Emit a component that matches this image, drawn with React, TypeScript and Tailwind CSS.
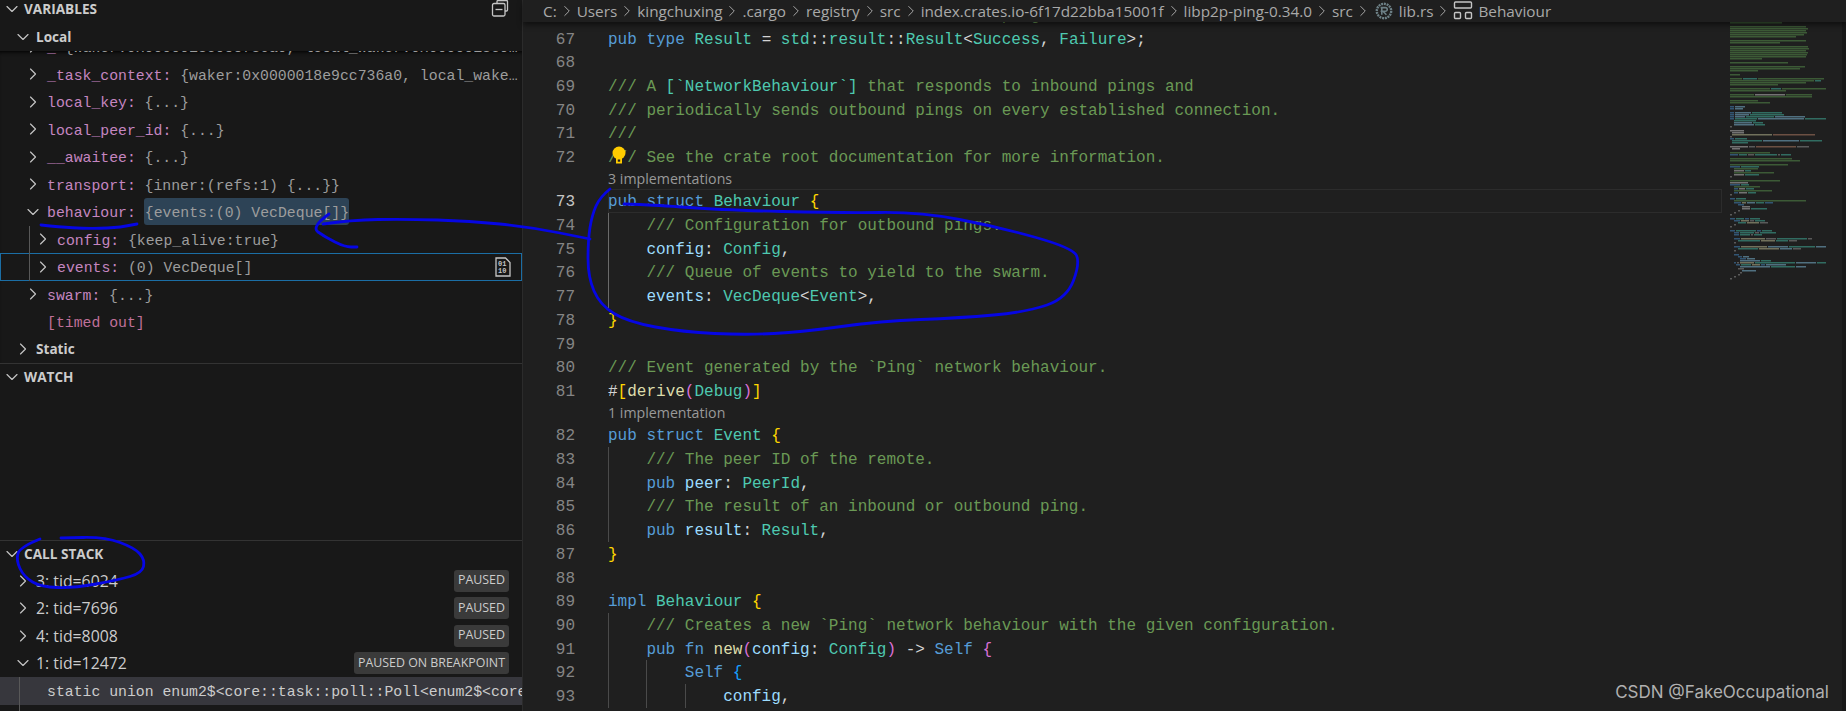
import React from 'react';
import { ChevronDown, ChevronRight } from 'lucide-react';

const SANS = 'font-["Open_Sans","Noto_Sans",sans-serif]';
const MONO = 'font-["Liberation_Mono",monospace]';

// Token colours for the editor
const TOKEN: Record<string, string> = {
  c: 'text-[#6a9955]',
  k: 'text-[#569cd6]',
  t: 'text-[#4ec9b0]',
  v: 'text-[#9cdcfe]',
  f: 'text-[#dcdcaa]',
  p: 'text-[#d4d4d4]',
  g: 'text-[#ffd700]',
  m: 'text-[#da70d6]',
  b: 'text-[#179fff]',
};

type Seg = [string, string];

interface CodeLine {
  n?: number;
  segs?: Seg[];
  guides?: number;
  active?: boolean;
  brightGuide?: boolean;
  lens?: string;
  bulb?: boolean;
}

const comment = (text: string, guides = 0, brightGuide = false): CodeLine => ({
  segs: [[text, 'c']],
  guides,
  brightGuide,
});

const lines: CodeLine[] = [
  { n: 66, ...comment('/// The result of an inbound or outbound ping.') },
  { n: 67, segs: [['pub type ', 'k'], ['Result', 't'], [' = ', 'p'], ['std', 't'], ['::', 'p'], ['result', 't'], ['::', 'p'], ['Result', 't'], ['<', 'p'], ['Success', 't'], [', ', 'p'], ['Failure', 't'], ['>;', 'p']] },
  { n: 68 },
  { n: 69, segs: [['/// A ', 'c'], ['[`NetworkBehaviour`]', 't'], [' that responds to inbound pings and', 'c']] },
  { n: 70, ...comment('/// periodically sends outbound pings on every established connection.') },
  { n: 71, ...comment('///') },
  { n: 72, ...comment('/// See the crate root documentation for more information.'), bulb: true },
  { lens: '3 implementations' },
  { n: 73, active: true, segs: [['pub struct ', 'k'], ['Behaviour', 't'], [' ', 'p'], ['{', 'g']] },
  { n: 74, ...comment('/// Configuration for outbound pings.', 1, true) },
  { n: 75, guides: 1, brightGuide: true, segs: [['config', 'v'], [': ', 'p'], ['Config', 't'], [',', 'p']] },
  { n: 76, ...comment('/// Queue of events to yield to the swarm.', 1, true) },
  { n: 77, guides: 1, brightGuide: true, segs: [['events', 'v'], [': ', 'p'], ['VecDeque', 't'], ['<', 'p'], ['Event', 't'], ['>,', 'p']] },
  { n: 78, segs: [['}', 'g']] },
  { n: 79 },
  { n: 80, ...comment('/// Event generated by the `Ping` network behaviour.') },
  { n: 81, segs: [['#', 'p'], ['[', 'g'], ['derive', 'f'], ['(', 'm'], ['Debug', 't'], [')', 'm'], [']', 'g']] },
  { lens: '1 implementation' },
  { n: 82, segs: [['pub struct ', 'k'], ['Event', 't'], [' ', 'p'], ['{', 'g']] },
  { n: 83, ...comment('/// The peer ID of the remote.', 1) },
  { n: 84, guides: 1, segs: [['pub ', 'k'], ['peer', 'v'], [': ', 'p'], ['PeerId', 't'], [',', 'p']] },
  { n: 85, ...comment('/// The result of an inbound or outbound ping.', 1) },
  { n: 86, guides: 1, segs: [['pub ', 'k'], ['result', 'v'], [': ', 'p'], ['Result', 't'], [',', 'p']] },
  { n: 87, segs: [['}', 'g']] },
  { n: 88 },
  { n: 89, segs: [['impl ', 'k'], ['Behaviour', 't'], [' ', 'p'], ['{', 'g']] },
  { n: 90, ...comment('/// Creates a new `Ping` network behaviour with the given configuration.', 1) },
  { n: 91, guides: 1, segs: [['pub fn ', 'k'], ['new', 'f'], ['(', 'm'], ['config', 'v'], [': ', 'p'], ['Config', 't'], [')', 'm'], [' -> ', 'p'], ['Self', 'k'], [' ', 'p'], ['{', 'm']] },
  { n: 92, guides: 2, segs: [['Self', 'k'], [' ', 'p'], ['{', 'b']] },
  { n: 93, guides: 3, segs: [['config', 'v'], [',', 'p']] },
];

const crumbs = ['C:', 'Users', 'kingchuxing', '.cargo', 'registry', 'src', 'index.crates.io-6f17d22bba15001f', 'libp2p-ping-0.34.0', 'src'];

// Minimap rows, 2px each: "_n" skips n columns, a letter + number is a coloured run
const MINI_COLOR: Record<string, string> = {
  c: '#4f7f45', k: '#3f77a8', t: '#3d9c8a', w: '#a8a8a8', y: '#a5a582', v: '#6fa3bd', o: '#9c6f5a', p: '#808080',
};

const miniRows: string[] = [
  'c52', '', 'c76', 'c78', 'c76', 'c77', 'c74', 'c66', '', 'c76', 'c50', '', 'c78', 'c79', 'c76', 'c78', 'c77', 'c76', 'c32', '',
  'c58', '', 'c75', 'c70', 'c28', '', 'c10', '', 'c12 t14 c66', 'c84 t6', 'c76', 'c48', '', 'c40 t10 c44', 'c56', '',
  'c24 w30 c26', 'c82', '', 'c28', 'c40', '', 'k4 v10', 'k4 v8', '', 'k4 v16 t30', 'k4 v14 t34', 'k4 v10 t28 v30', 'k4 t22 v46 t22', '_4 t22', '_4 v18 t10', '_4 v20 t10', 'p2', '',
  'w14', '_2 w12', '_2 y40 o42', 'p2', 'k4 t12', '_2 t30 v36 t22', '_2 t16', '', 'w18 p6 o40 p12', '_2 w8', '',
  'c40', 'k8 t8 p6 t22 p2 t10', '', 'c62', 'c70', '', 'c58', 'k10 t18', '_4 c24', '_4 w10 t6', '_4 c40', '_4 w10 t14', 'p2', '',
  'c50', 'w18', 'k10 t8', '_4 c26', '_4 k4 w6 t8', '_4 c38', '_4 k4 w8 t8', 'p2', '',
  'k5 t10', '_4 c72', '_4 k7 y4 v8 t8 k8', '_8 k6', '_12 w8', '_12 w8 t16', '_8 p2', '_4 p2', 'p2', '',
  'k5 t8 k4 t10', '_4 k6 y8 p4 t10', '_8 t8 y12 p8', '_4 p2', 'p2', '',
  'k5 t20 k4 t10', '_4 k5 t14 p4 t16', '_4 k5 t10 p2 t8', '', '_4 k6 y24 p10 t30 p4', '_8 t22 y14 t12 p8', '_4 p2', '',
  '_4 k6 y26 v20 t26 v24 t12', '_8 t20 y20 v12 p8', '_4 p2', '',
  '_4 k5', '_8 k4 v6', '_10 k6 v8', '_10 v20 t10', '_4 k2 p2 y14 t40 v20 t20 p2', '_6 k4 t10 y8 k4 v20', '_10 v30 t24 v10', '_8 p6', '_12 v14', '_10 p2', '_8 p2', '_4 p2', 'p2',
];

function Minimap() {
  return (
    <svg width="96" height="258" className="shrink-0 blur-[0.3px]">
      {miniRows.map((row, r) => {
        let x = 0;
        return row.split(' ').filter(Boolean).map((seg, i) => {
          const len = Number(seg.replace(/^./, ''));
          const key = seg[0];
          if (key === '_') {
            x += len;
            return null;
          }
          const rect = <rect key={`${r}-${i}`} x={x} y={r * 2} width={len} height={1.5} fill={MINI_COLOR[key]} opacity={0.62} />;
          x += len + 1;
          return rect;
        });
      })}
    </svg>
  );
}

function CollapseIcon() {
  return (
    <svg width="20" height="20" viewBox="0 0 20 20" fill="none" stroke="#c5c5c5" strokeWidth="1.3">
      <path d="M7 4V2.5A1 1 0 0 1 8 1.5h8.5a1 1 0 0 1 1 1V11a1 1 0 0 1-1 1H15" />
      <rect x="2.5" y="4.5" width="12.5" height="12.5" rx="1.5" />
      <path d="M5.5 10.5h7" />
    </svg>
  );
}

function BinaryIcon() {
  return (
    <svg width="16" height="20" viewBox="0 0 16 20" className="shrink-0">
      <path d="M1 1h9.5L15 5.5V19H1z" fill="none" stroke="#c5c5c5" strokeWidth="1.3" />
      <text x="3" y="9" fontSize="7" fontWeight="700" fill="#c5c5c5" fontFamily="Liberation Mono">01</text>
      <text x="3" y="16" fontSize="7" fontWeight="700" fill="#c5c5c5" fontFamily="Liberation Mono">10</text>
    </svg>
  );
}

function RustIcon() {
  return (
    <svg width="18" height="18" viewBox="0 0 18 18" fill="none" className="shrink-0">
      <circle cx="9" cy="9" r="7.2" stroke="#6d8086" strokeWidth="2.4" strokeDasharray="2 0.8" />
      <path d="M5.6 5.6h4.8a1.8 1.8 0 0 1 0 3.7H5.6M8 9.3l3.4 3.4M6.8 5.6v7.1" stroke="#6d8086" strokeWidth="1.6" />
    </svg>
  );
}

function StructIcon() {
  return (
    <svg width="20" height="20" viewBox="0 0 20 20" fill="none" stroke="#c5c5c5" strokeWidth="1.4" className="shrink-0">
      <rect x="1.5" y="1" width="17" height="6" rx="1" />
      <rect x="1.5" y="11.5" width="6" height="6" rx="1" />
      <rect x="12.5" y="11.5" width="6" height="6" rx="1" />
    </svg>
  );
}

function Bulb() {
  return (
    <svg width="16" height="18" viewBox="0 0 16 18" className="absolute left-[3px] top-[1px]">
      <circle cx="8" cy="7" r="6.5" fill="#ffcc00" />
      <path d="M5 11h6v6.5H5z" fill="#ffcc00" />
      <rect x="6.8" y="13.5" width="2.4" height="2.2" fill="#1f1f1f" />
    </svg>
  );
}

function Chevron({ open }: { open?: boolean }) {
  const Icon = open ? ChevronDown : ChevronRight;
  return <Icon size={20} strokeWidth={1.4} className="shrink-0 text-[#c5c5c5]" />;
}

function SectionHeader({ title, height, children }: { title: string; height: string; children?: React.ReactNode }) {
  return (
    <div className={`flex items-start pl-[2px] pr-[12px] ${height}`}>
      <div className="flex items-center h-[18px] w-full">
        <Chevron open />
        <span className={`ml-[2px] text-[13.6px] font-bold text-[#cccccc] ${SANS}`}>{title}</span>
        <div className="ml-auto">{children}</div>
      </div>
    </div>
  );
}

function VarRow({ name, value, open, depth = 0, focused, nameClass = 'text-[#c586c0]', clipped }: {
  name: string;
  value?: string;
  open?: boolean;
  depth?: number;
  focused?: boolean;
  nameClass?: string;
  clipped?: boolean;
}) {
  return (
    <div className={`flex items-center h-[27.5px] whitespace-nowrap ${depth === 1 ? 'pl-[33px]' : 'pl-[23px]'} ${focused ? 'outline outline-1 -outline-offset-1 outline-[#1b6ea5]' : ''} ${clipped ? 'overflow-hidden' : ''} relative`}>
      {depth === 1 && <span className="absolute left-[29px] top-0 bottom-0 border-l border-[#585858]" />}
      <Chevron open={open} />
      <span className={`ml-[4px] pt-[3px] text-[14.8px] ${MONO} ${nameClass}`}>{name}</span>
      {value && <span className={`ml-[8.8px] pt-[3px] text-[14.8px] text-[#9d9d9d] truncate ${MONO}`}>{value}</span>}
      {focused && <span className="ml-auto mr-[11px]"><BinaryIcon /></span>}
    </div>
  );
}

function ThreadRow({ label, badge, open }: { label: string; badge: string; open?: boolean }) {
  return (
    <div className="flex items-center h-[27.5px] pl-[13px] pr-[13px]">
      <Chevron open={open} />
      <span className={`ml-[3px] pt-[2px] text-[15.8px] text-[#cccccc] ${SANS}`}>{label}</span>
      <span className={`ml-auto h-[22px] px-[4px] flex items-center rounded-[3px] bg-[#3a3a3a] text-[12.4px] text-[#cccccc] ${SANS}`}>{badge}</span>
    </div>
  );
}

function Sidebar() {
  return (
    <div className="w-[523px] shrink-0 flex flex-col border-r border-[#2b2b2b] bg-[#181818]">
      {/* Variables */}
      <div className="h-[363px] shrink-0 flex flex-col overflow-hidden">
        <SectionHeader title="VARIABLES" height="h-[23px]">
          <CollapseIcon />
        </SectionHeader>
        <div className="flex items-center h-[27.5px] pl-[13px] shrink-0">
          <Chevron open />
          <span className={`ml-[3px] text-[13.6px] font-bold text-[#cccccc] ${SANS}`}>Local</span>
        </div>
        <div className="flex-1 overflow-hidden shadow-[inset_0_4px_4px_-3px_#000000]">
          <div className="-mt-[17.5px]">
            <VarRow name="_" value="{waker:0x0000018e9cc736a0, local_waker:0x0000018e9cc736a0}" clipped />
            <VarRow name="_task_context:" value="{waker:0x0000018e9cc736a0, local_wake…" clipped />
            <VarRow name="local_key:" value="{...}" />
            <VarRow name="local_peer_id:" value="{...}" />
            <VarRow name="__awaitee:" value="{...}" />
            <VarRow name="transport:" value="{inner:(refs:1) {...}}" />
            <div className="flex items-center h-[27.5px] pl-[23px] whitespace-nowrap">
              <Chevron open />
              <span className={`ml-[4px] pt-[3px] text-[14.8px] text-[#c586c0] ${MONO}`}>behaviour:</span>
              <span className={`ml-[8px] h-[27px] pt-[3px] pl-[1px] flex items-center rounded-[3px] bg-[#2d4356] text-[14.8px] text-[#9d9d9d] ${MONO}`}>{'{events:(0) VecDeque[]}'}</span>
            </div>
            <VarRow depth={1} name="config:" value="{keep_alive:true}" />
            <VarRow depth={1} focused name="events:" value="(0) VecDeque[]" />
            <VarRow name="swarm:" value="{...}" />
            <div className={`flex items-center h-[27.5px] pl-[47px] pt-[3px] text-[14.8px] text-[#c0709a] ${MONO}`}>[timed out]</div>
            <div className="flex items-center h-[27.5px] pl-[13px]">
              <Chevron />
              <span className={`ml-[3px] text-[13.6px] font-bold text-[#cccccc] ${SANS}`}>Static</span>
            </div>
          </div>
        </div>
      </div>

      {/* Watch */}
      <div className="h-[177px] shrink-0 border-t border-[#333333] pt-[4px]">
        <SectionHeader title="WATCH" height="h-[20px]" />
      </div>

      {/* Call stack */}
      <div className="flex-1 border-t border-[#333333] pt-[4px] overflow-hidden">
        <SectionHeader title="CALL STACK" height="h-[22px]" />
        <ThreadRow label="3: tid=6024" badge="PAUSED" />
        <ThreadRow label="2: tid=7696" badge="PAUSED" />
        <ThreadRow label="4: tid=8008" badge="PAUSED" />
        <ThreadRow label="1: tid=12472" badge="PAUSED ON BREAKPOINT" open />
        <div className="flex items-center h-[28px] bg-[#37373d] pl-[47px] overflow-hidden whitespace-nowrap relative">
          <span className="absolute left-[19px] top-0 bottom-0 border-l border-[#585858]" />
          <span className={`pt-[3px] text-[14.8px] text-[#cccccc] ${MONO}`}>{'static union enum2$<core::task::poll::Poll<enum2$<core::result::Result'}</span>
        </div>
        <div className="h-[6px] ml-[19px] border-l border-[#585858]" />
      </div>
    </div>
  );
}

function Line({ line }: { line: CodeLine }) {
  if (line.lens) {
    return (
      <div className="flex h-[20.8px] items-center">
        <div className="w-[85px] shrink-0" />
        <span className={`text-[14.2px] text-[#999999] ${SANS}`}>{line.lens}</span>
      </div>
    );
  }
  return (
    <div className="flex h-[23.7px] items-stretch">
      <div className={`w-[52px] shrink-0 pt-[2px] text-right text-[16px] leading-[23.7px] ${MONO} ${line.active ? 'text-[#c6c6c6]' : 'text-[#858585]'}`}>{line.n}</div>
      <div className="w-[33px] shrink-0" />
      <div className={`flex flex-1 relative whitespace-pre text-[16px] leading-[23.7px] ${MONO} ${line.active ? 'outline outline-1 -outline-offset-1 outline-[#2c2c2c]' : ''}`}>
        {Array.from({ length: line.guides ?? 0 }).map((_, i) => (
          <span key={i} className={`w-[38.4px] shrink-0 border-l ${line.brightGuide ? 'border-[#6a6a6a]' : 'border-[#4a4a4a]'}`} />
        ))}
        <span className="pt-[2px]">
          {line.segs?.map(([text, tok], i) => (
            <span key={i} className={TOKEN[tok]}>{text}</span>
          ))}
        </span>
        {line.bulb && <Bulb />}
      </div>
    </div>
  );
}

function Editor() {
  return (
    <div className="flex-1 flex flex-col bg-[#1f1f1f] min-w-0">
      <div className={`h-[22px] shrink-0 flex items-center pl-[20px] gap-[1px] text-[15.3px] text-[#a9a9a9] bg-[#1f1f1f] shadow-[0_3px_5px_#00000080] z-10 whitespace-nowrap ${SANS}`}>
        {crumbs.map((c, i) => (
          <React.Fragment key={i}>
            <span>{c}</span>
            <ChevronRight size={18} strokeWidth={1.3} className="text-[#a9a9a9]" />
          </React.Fragment>
        ))}
        <span className="ml-[2px] mr-[5px]"><RustIcon /></span>
        <span>lib.rs</span>
        <ChevronRight size={18} strokeWidth={1.3} className="text-[#a9a9a9]" />
        <StructIcon />
        <span className="ml-[4px]">Behaviour</span>
      </div>
      <div className="flex-1 flex overflow-hidden">
        <div className="w-[1199px] shrink-0 overflow-hidden">
          <div className="-mt-[19.2px]">
            {lines.map((l, i) => <Line key={i} line={l} />)}
          </div>
        </div>
        <div className="flex-1 pl-[8px] relative">
          <Minimap />
        </div>
        <div className="w-[4px] shrink-0 bg-[#181818]" />
      </div>
    </div>
  );
}

type Pt = [number, number];

// Smooth freehand stroke through the given points
function stroke(points: Pt[]): string {
  let d = `M${points[0][0]} ${points[0][1]}`;
  for (let i = 1; i < points.length - 1; i++) {
    const [x, y] = points[i];
    const [nx, ny] = points[i + 1];
    d += ` Q${x} ${y} ${(x + nx) / 2} ${(y + ny) / 2}`;
  }
  const last = points[points.length - 1];
  return `${d} L${last[0]} ${last[1]}`;
}

const marks: Pt[][] = [
  [[41, 225], [60, 227], [85, 228.5], [115, 228], [137, 224]],
  [[323, 224], [351, 220], [405, 219], [470, 221], [530, 227], [590, 239]],
  [[329, 214], [311, 227], [325, 237], [345, 247], [357, 247]],
  [[610, 189], [600, 197], [592, 215], [588, 240], [588, 277], [600, 305], [628, 322], [683, 332], [746, 335], [802, 332], [881, 321], [960, 318], [1027, 312], [1067, 298], [1080, 263], [1073, 248], [999, 227], [920, 212], [841, 213], [723, 210], [655, 205], [624, 204]],
  [[40, 539], [20, 547], [16, 560], [24, 577], [41, 587], [74, 588], [118, 580], [142, 573], [145, 560], [135, 548], [105, 537], [61, 538]],
];

export default function App() {
  return (
    <div className="relative flex w-[1846px] h-[711px] overflow-hidden bg-[#1f1f1f]">
      <Sidebar />
      <Editor />
      <svg width="1846" height="711" fill="none" className="absolute inset-0 pointer-events-none">
        {marks.map((m, i) => (
          <path key={i} d={stroke(m)} stroke="#0606e4" strokeWidth="2.8" strokeLinecap="round" />
        ))}
      </svg>
      <span className="absolute right-[17px] top-[680px] whitespace-nowrap text-[17px] text-[#b0b0b0] font-['Inter',sans-serif]">CSDN @FakeOccupational</span>
    </div>
  );
}
